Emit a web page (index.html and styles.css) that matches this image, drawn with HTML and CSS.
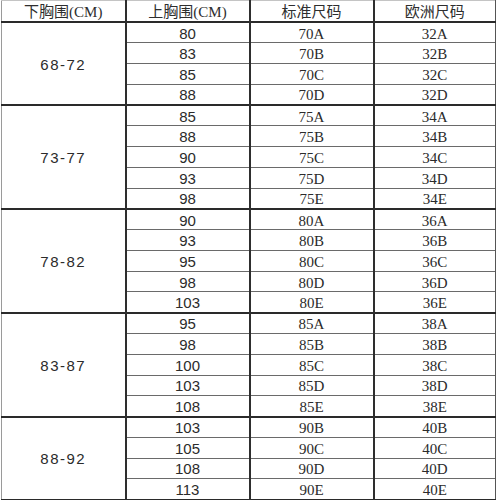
FILE: index.html
```html
<!DOCTYPE html>
<html lang="zh-CN">
<head>
<meta charset="utf-8">
<title>尺码对照表</title>
<link rel="stylesheet" href="styles.css">
</head>
<body>
<table class="size-table">
  <colgroup>
    <col class="c1"><col class="c2"><col class="c3"><col class="c4">
  </colgroup>
  <thead>
    <tr class="head">
      <th>下胸围(CM)</th><th>上胸围(CM)</th><th>标准尺码</th><th>欧洲尺码</th>
    </tr>
  </thead>
  <tbody class="group">
    <tr><td class="under" rowspan="4">68-72</td><td class="bust">80</td><td class="std">70A</td><td class="eu">32A</td></tr>
    <tr><td class="bust">83</td><td class="std">70B</td><td class="eu">32B</td></tr>
    <tr><td class="bust">85</td><td class="std">70C</td><td class="eu">32C</td></tr>
    <tr><td class="bust">88</td><td class="std">70D</td><td class="eu">32D</td></tr>
  </tbody>
  <tbody class="group">
    <tr><td class="under" rowspan="5">73-77</td><td class="bust">85</td><td class="std">75A</td><td class="eu">34A</td></tr>
    <tr><td class="bust">88</td><td class="std">75B</td><td class="eu">34B</td></tr>
    <tr><td class="bust">90</td><td class="std">75C</td><td class="eu">34C</td></tr>
    <tr><td class="bust">93</td><td class="std">75D</td><td class="eu">34D</td></tr>
    <tr><td class="bust">98</td><td class="std">75E</td><td class="eu">34E</td></tr>
  </tbody>
  <tbody class="group">
    <tr><td class="under" rowspan="5">78-82</td><td class="bust">90</td><td class="std">80A</td><td class="eu">36A</td></tr>
    <tr><td class="bust">93</td><td class="std">80B</td><td class="eu">36B</td></tr>
    <tr><td class="bust">95</td><td class="std">80C</td><td class="eu">36C</td></tr>
    <tr><td class="bust">98</td><td class="std">80D</td><td class="eu">36D</td></tr>
    <tr><td class="bust">103</td><td class="std">80E</td><td class="eu">36E</td></tr>
  </tbody>
  <tbody class="group">
    <tr><td class="under" rowspan="5">83-87</td><td class="bust">95</td><td class="std">85A</td><td class="eu">38A</td></tr>
    <tr><td class="bust">98</td><td class="std">85B</td><td class="eu">38B</td></tr>
    <tr><td class="bust">100</td><td class="std">85C</td><td class="eu">38C</td></tr>
    <tr><td class="bust">103</td><td class="std">85D</td><td class="eu">38D</td></tr>
    <tr><td class="bust">108</td><td class="std">85E</td><td class="eu">38E</td></tr>
  </tbody>
  <tbody class="group">
    <tr><td class="under" rowspan="4">88-92</td><td class="bust">103</td><td class="std">90B</td><td class="eu">40B</td></tr>
    <tr><td class="bust">105</td><td class="std">90C</td><td class="eu">40C</td></tr>
    <tr><td class="bust">108</td><td class="std">90D</td><td class="eu">40D</td></tr>
    <tr><td class="bust">113</td><td class="std">90E</td><td class="eu">40E</td></tr>
  </tbody>
</table>
</body>
</html>
```

FILE: styles.css
```css
html, body {
  margin: 0;
  padding: 0;
  background: #ffffff;
}

body {
  padding-left: 1px;
}

.size-table {
  border-collapse: collapse;
  table-layout: fixed;
  width: 494px;
  border-top: 1px solid #c4c4c4;
  border-left: 1px solid #9a9a9a;
  border-right: 1px solid #555555;
  border-bottom: 2px solid #2a2a2a;
  color: #2b2b2b;
}

.c1, .c2, .c3 { width: 124px; }
.c4 { width: 122px; }

.size-table th,
.size-table td {
  padding: 2px 0 0 0;
  text-align: center;
  vertical-align: middle;
  border-right: 2px solid #2e2e2e;
  border-top: 1px solid #6a6a6a;
  line-height: 16px;
}

.size-table th:last-child,
.size-table td:last-child {
  border-right: 1px solid #555555;
}

.head th {
  height: 19px;
  padding-top: 1px;
  font-family: "Liberation Serif", "Noto Sans CJK SC", serif;
  font-size: 15px;
  font-weight: normal;
  color: #2e2e2e;
  border-top: 1px solid #c4c4c4;
}

.size-table tbody tr {
  height: 20.78px;
}

.group tr:first-child td {
  border-top: 2px solid #2a2a2a;
}

.under {
  font-family: "Liberation Sans Narrow", "Liberation Sans", sans-serif;
  font-size: 15px;
  letter-spacing: 1.5px;
  padding-left: 2px;
}

.bust {
  font-family: "Liberation Sans Narrow", "Liberation Sans", sans-serif;
  font-size: 15px;
}

.std,
.eu {
  font-family: "Liberation Serif", serif;
  font-size: 15px;
}
```
